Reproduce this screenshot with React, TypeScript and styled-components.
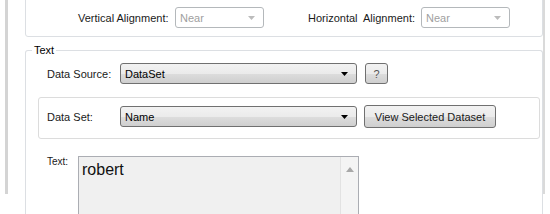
import React from "react"
import styled, { createGlobalStyle } from "styled-components"

const GlobalStyle = createGlobalStyle`
  html, body {
    margin: 0;
    padding: 0;
    background: #fff;
  }
  body {
    font-family: "Liberation Sans", Arial, sans-serif;
    font-size: 11px;
    color: #000;
  }
`

const ArrowDown: React.FC<{ disabled?: boolean }> = ({ disabled }) => (
  <svg width="7" height="4" viewBox="0 0 7 4">
    <path d="M0 0 L7 0 L3.5 4 Z" fill={disabled ? "#bcbcbc" : "#000"} />
  </svg>
)

const Combo: React.FC<{ value: string; width: number; disabled?: boolean }> = ({ value, width, disabled }) => (
  <S.Combo disabled={disabled} style={{ width }}>
    <S.ComboText disabled={disabled}>{value}</S.ComboText>
    <ArrowDown disabled={disabled} />
  </S.Combo>
)

export default function App() {
  return (
    <>
      <GlobalStyle />
      <S.Page>
        <S.Window>
          <S.TopGroup>
            <S.AlignRow>
              <S.AlignLabel w={97}>Vertical Alignment:</S.AlignLabel>
              <Combo value="Near" width={89} disabled />
              <S.AlignLabel w={113} lead={44}>Horizontal&nbsp; Alignment:</S.AlignLabel>
              <Combo value="Near" width={89} disabled />
            </S.AlignRow>
          </S.TopGroup>

          <S.Group>
            <S.Legend>Text</S.Legend>
            <S.Row>
              <S.Label>Data Source:</S.Label>
              <Combo value="DataSet" width={237} />
              <S.Button small>?</S.Button>
            </S.Row>
            <S.Panel>
              <S.Label>Data Set:</S.Label>
              <Combo value="Name" width={237} />
              <S.Button>View Selected Dataset</S.Button>
            </S.Panel>
            <S.TextRow>
              <S.SmallLabel>Text:</S.SmallLabel>
              <S.TextBox>
                <S.TextValue>robert</S.TextValue>
                <S.ScrollBar>
                  <svg width="8" height="5" viewBox="0 0 8 5">
                    <path d="M0 5 L4 0 L8 5 Z" fill="#a8a8a8" />
                  </svg>
                </S.ScrollBar>
              </S.TextBox>
            </S.TextRow>
          </S.Group>
        </S.Window>
      </S.Page>
    </>
  )
}

const S = {
  Page: styled.div`
    width: 550px;
    height: 214px;
    overflow: hidden;
    background: #fff;
  `,
  Window: styled.div`
    margin-left: 5px;
    height: 214px;
    width: 518px;
    border-left: 3px solid #d4d4d4;
    border-right: 2px solid #dadada;
    padding-left: 17px;
  `,
  TopGroup: styled.div`
    margin-top: -20px;
    padding: 26px 0 8px 0;
    border: 1px solid #dcdfe3;
    border-radius: 3px;
  `,
  AlignRow: styled.div`
    display: flex;
    align-items: center;
    padding-left: 52px;
  `,
  AlignLabel: styled.span<{ w: number; lead?: number }>`
    width: ${({ w }) => w}px;
    flex-shrink: 0;
    margin-left: ${({ lead }) => lead ?? 0}px;
    white-space: nowrap;
    color: #1a1a1a;
  `,
  Combo: styled.div<{ disabled?: boolean }>`
    height: 21px;
    box-sizing: border-box;
    flex-shrink: 0;
    display: flex;
    align-items: center;
    justify-content: space-between;
    padding: 0 8px 0 4px;
    border: 1px solid ${({ disabled }) => (disabled ? "#b4b8bb" : "#707070")};
    border-radius: 3px;
    background: ${({ disabled }) =>
      disabled
        ? "#fff"
        : "linear-gradient(to bottom, #f2f2f2 0%, #ebebeb 50%, #dddddd 51%, #cfcfcf 100%)"};
  `,
  ComboText: styled.span<{ disabled?: boolean }>`
    color: ${({ disabled }) => (disabled ? "#a0a0a0" : "#000")};
  `,
  Group: styled.fieldset`
    margin: 6px 0 0 0;
    padding: 6px 2px 0 12px;
    border: 1px solid #dcdfe3;
    border-bottom: none;
    border-radius: 3px 3px 0 0;
    min-width: 0;
  `,
  Legend: styled.legend`
    padding: 0 2px;
    margin-left: -6px;
    line-height: 14px;
  `,
  Row: styled.div`
    display: flex;
    align-items: center;
    padding-left: 9px;
    gap: 8px;
  `,
  Label: styled.span`
    width: 65px;
    white-space: nowrap;
    color: #1a1a1a;
  `,
  Button: styled.div<{ small?: boolean }>`
    height: ${({ small }) => (small ? "21px" : "23px")};
    width: ${({ small }) => (small ? "23px" : "132px")};
    box-sizing: border-box;
    display: flex;
    align-items: center;
    justify-content: center;
    border: 1px solid #707070;
    border-radius: 3px;
    color: ${({ small }) => (small ? "#555" : "#1a1a1a")};
    background: linear-gradient(to bottom, #f2f2f2 0%, #ebebeb 50%, #dddddd 51%, #cfcfcf 100%);
    margin-left: ${({ small }) => (small ? "0" : "-1px")};
  `,
  Panel: styled.div`
    margin-top: 13px;
    display: flex;
    align-items: center;
    gap: 8px;
    padding: 7px 0 10px 8px;
    border: 1px solid #dcdcdc;
    border-radius: 3px;
  `,
  TextRow: styled.div`
    display: flex;
    align-items: flex-start;
    margin-top: 17px;
    padding-left: 9px;
  `,
  SmallLabel: styled.span`
    width: 31px;
    font-size: 10px;
    line-height: 11px;
    color: #1a1a1a;
  `,
  TextBox: styled.div`
    width: 281px;
    height: 70px;
    box-sizing: border-box;
    display: flex;
    justify-content: space-between;
    border: 1px solid #abadb3;
    border-bottom-color: #e3e9ef;
    background: #f0f0f0;
  `,
  TextValue: styled.span`
    padding: 4px 0 0 3px;
    font-size: 16px;
    color: #111;
  `,
  ScrollBar: styled.div`
    width: 17px;
    display: flex;
    justify-content: center;
    padding-top: 10px;
    border-left: 1px solid #e2e2e2;
    background: #f4f4f4;
  `,
}
